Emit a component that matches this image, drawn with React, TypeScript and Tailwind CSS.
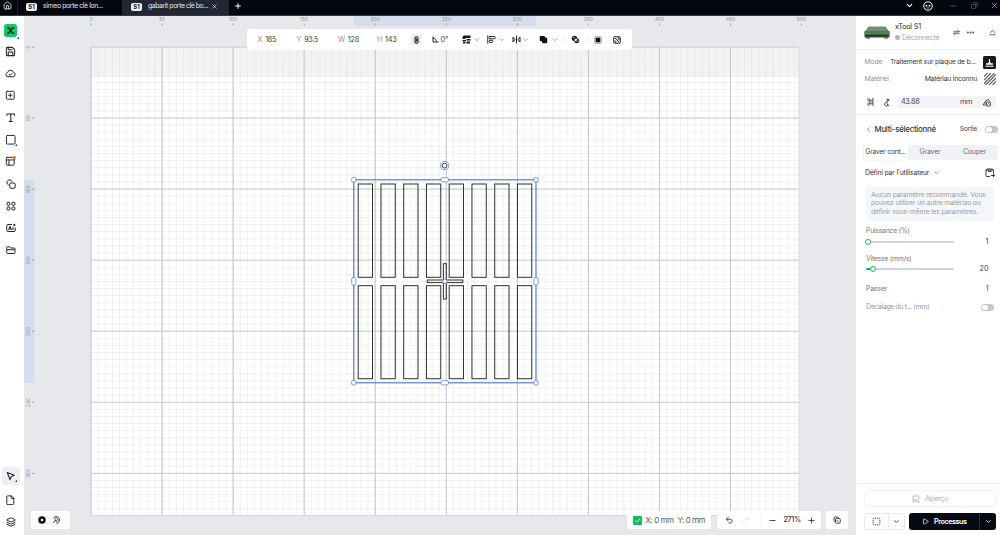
import type { ReactNode } from "react";
import {
  AlignStartVertical, ChevronDown, ChevronLeft, Copy, Ellipsis,
  House, Layers, Minus, Plus, Redo2, Save, Square, SquareDashed, Type, Undo2, X,
  SquarePlus, PanelsTopLeft, Play, File as FileIcon,
} from "lucide-react";

const STEP = 71.05;
const OX = 67; // board origin inside the canvas drawing
const OY = 31;
const BOARD_W = 708;
const BOARD_H = 468.5;

const range = (n: number) => Array.from({ length: n }, (_, i) => i);

function Canvas() {
  return (
    <svg width="832" height="519" viewBox="0 0 832 519" className="block">
      <rect width="832" height="519" fill="#e7e8ec" />
      <rect x={OX} y={OY} width={BOARD_W} height={BOARD_H} fill="#fff" />
      <rect x={OX} y={OY} width={BOARD_W} height="30" fill="#f2f3f5" />
      {range(100).map((i) => (
        <line key={i} x1={OX + i * 7.105} x2={OX + i * 7.105} y1={OY} y2={OY + BOARD_H} stroke="#d9dadc" strokeWidth="0.5" opacity="0.75" />
      ))}
      {range(66).map((i) => (
        <line key={i} y1={OY + i * 7.105} y2={OY + i * 7.105} x1={OX} x2={OX + BOARD_W} stroke="#d9dadc" strokeWidth="0.5" opacity={i < 5 ? 0.25 : 0.75} />
      ))}
      {range(10).map((i) => (
        <line key={i} x1={OX + i * STEP} x2={OX + i * STEP} y1={OY} y2={OY + BOARD_H} stroke="#c3c4c6" strokeWidth="1" />
      ))}
      {range(7).map((i) => (
        <line key={i} y1={OY + i * STEP} y2={OY + i * STEP} x1={OX} x2={OX + BOARD_W} stroke="#c9cacc" strokeWidth="1" />
      ))}
      <rect x={OX} y={OY} width={BOARD_W} height={BOARD_H} fill="none" stroke="#d8d9dc" strokeWidth="1" />

      <rect x="330" y="0" width="182" height="10" fill="#d4dced" />
      <rect x="0" y="164" width="10.5" height="203" fill="#d4dced" />
      <g fontFamily="Inter, sans-serif" fontSize="5" fill="#8f929a" textAnchor="middle">
        {range(11).map((i) => (
          <g key={i}>
            <text x={OX + i * STEP} y="5">{i * 50}</text>
            <rect x={OX - 0.4 + i * STEP} y="7.5" width="0.8" height="2" />
          </g>
        ))}
        {range(7).map((i) => (
          <g key={i}>
            <text transform={`translate(5.5 ${OY + i * STEP}) rotate(-90)`}>{i * 50}</text>
            <rect x="8" y={OY - 0.4 + i * STEP} width="2.4" height="0.8" />
          </g>
        ))}
      </g>

      <g fill="none" stroke="#303030" strokeWidth="1">
        {range(8).map((i) => (
          <g key={i}>
            <rect x={334.2 + i * 22.75} y="168" width="14.3" height="93.3" />
            <rect x={334.2 + i * 22.75} y="269.7" width="14.3" height="93" />
          </g>
        ))}
        <rect x="403.3" y="264" width="35.5" height="2.6" />
        <rect x="419.4" y="247.7" width="2.9" height="35.3" />
      </g>
      <rect x="329.8" y="163.8" width="182.2" height="203" fill="none" stroke="#4873c8" strokeWidth="1.1" />
      <g fill="#fff" stroke="#5a84df" strokeWidth="0.8">
        {[329.8, 512].map((x) => [163.8, 366.8].map((y) => <rect key={`${x}-${y}`} x={x - 2.1} y={y - 2.1} width="4.2" height="4.2" rx="0.8" />))}
        {[163.8, 366.8].map((y) => <rect key={y} x="417" y={y - 2.1} width="7.5" height="4.2" rx="1.4" />)}
        {[329.8, 512].map((x) => <rect key={x} x={x - 2.1} y="261.5" width="4.2" height="7.6" rx="1.4" />)}
        <rect x="418.9" y="263.3" width="4" height="4" rx="0.7" />
        <circle cx="420.6" cy="149.7" r="4.1" />
      </g>
      <circle cx="420.6" cy="149.7" r="2.4" fill="#fff" stroke="#333b4f" strokeWidth="1" />
    </svg>
  );
}

function Tab({ label, active }: { label: string; active?: boolean }) {
  return (
    <div className={`flex h-[15px] items-center text-[6.900px] text-[#e4e5e9] ${active ? "w-[107px] bg-[#232633] pl-[9px]" : "w-[104px] pl-2"}`}>
      <span className="flex h-2 w-[11px] items-center justify-center rounded-[2px] bg-[#f1f2f6] text-[6px] leading-none font-bold text-[#171a26]">S1</span>
      <span className={`whitespace-nowrap ${active ? "ml-[6px] w-[60px] tracking-[-0.430px]" : "ml-[6px] tracking-[-0.370px]"}`}>{label}</span>
      {active && <X size={7} strokeWidth={2.400} className="ml-[3px] shrink-0" />}
    </div>
  );
}

function TopBar() {
  return (
    <header className="flex h-4 shrink-0 items-center border-b border-[#393640] bg-[#04070f] text-white">
      <div className="flex h-[15px] w-[18px] items-center justify-center border-r border-[#1b1e27]">
        <House size={9} strokeWidth={2} className="-mt-[4px] -ml-[3px]" />
      </div>
      <div className="flex h-[15px] items-start overflow-hidden">
        <div className="-mt-[1px] flex items-center">
          <Tab label="simeo porte clé lon..." />
        </div>
        <div className="flex h-[15px] bg-[#232633]">
          <div className="-mt-[1px]"><Tab label="gabarit porte clé bo..." active /></div>
        </div>
        <Plus size={8} strokeWidth={3} className="mt-[2px] ml-[5px]" />
      </div>
      <div className="-mt-[4px] ml-auto flex items-center">
        <ChevronDown size={9} strokeWidth={3} />
        <svg width="10" height="10" viewBox="0 0 20 20" className="ml-[9px]" fill="none" stroke="#fff" strokeWidth="2">
          <circle cx="10" cy="10" r="8.500" />
          <circle cx="7" cy="9.500" r="1.800" fill="#fff" stroke="none" />
          <circle cx="13" cy="9.500" r="1.800" fill="#fff" stroke="none" />
          <path d="M7 14h6" strokeWidth="1.300" />
        </svg>
        <Minus size={8} strokeWidth={2} className="ml-[16px] text-[#777a83]" />
        <Copy size={7} strokeWidth={2} className="ml-[14px] rotate-90 text-[#777a83]" />
        <X size={9} strokeWidth={2} className="mr-[1px] ml-[12px] text-[#a3a5ac]" />
      </div>
    </header>
  );
}

function Tool({ children }: { children: ReactNode }) {
  return <div className="relative flex h-[22px] w-full shrink-0 items-center justify-center">{children}</div>;
}

function Corner({ className }: { className: string }) {
  return <svg width="2" height="2" viewBox="0 0 2 2" className={`absolute ${className}`}><path d="M2 0v2H0Z" fill="#222" /></svg>;
}

function SideBar() {
  return (
    <aside className="flex w-6 shrink-0 flex-col bg-white pr-[3px] text-[#23262c]">
      <div className="relative mt-2 flex h-[13px] justify-center">
        <svg width="13" height="13" viewBox="0 0 26 26">
          <rect width="26" height="26" rx="5" fill="#17c56f" />
          <path d="M6 7.500h3.500l7.500 11h3.500M20.500 7.500H17l-7.500 11H6" fill="none" stroke="#06281a" strokeWidth="3" />
        </svg>
        <Corner className="top-[13px] left-[17px]" />
      </div>
      <div className="mt-[3.500px] flex flex-col items-center">
        <Tool><Save size={11} strokeWidth={2.300} /></Tool>
        <Tool>
          <svg width="11" height="11" viewBox="0 0 22 22" fill="none" stroke="currentColor" strokeWidth="2" strokeLinejoin="round">
            <path d="M6 17.500a4.300 4.300 0 0 1-.800-8.500 6 6 0 0 1 11.600-.300A4.500 4.500 0 0 1 16.500 17.500Z" />
            <path d="m8 12.300 2.300 2.200 4-4" />
          </svg>
        </Tool>
        <Tool><SquarePlus size={10.500} strokeWidth={2.200} /></Tool>
        <Tool><Type size={11.500} strokeWidth={2.200} /></Tool>
        <Tool>
          <Square size={11.500} strokeWidth={2} />
          <Corner className="top-[15px] left-[15px]" />
        </Tool>
        <Tool>
          <PanelsTopLeft size={10.500} strokeWidth={2.200} />
          <span className="absolute top-[5px] left-[13px] size-[3px] rounded-full bg-[#f0762b]" />
        </Tool>
        <Tool>
          <svg width="10" height="10" viewBox="0 0 20 20" fill="none" stroke="currentColor" strokeWidth="2">
            <rect x="7.500" y="8" width="11" height="10.500" rx="2.500" />
            <path d="M5.500 12A5.300 5.300 0 1 1 12.300 5.500" />
          </svg>
        </Tool>
        <Tool>
          <svg width="10" height="10" viewBox="0 0 20 20" fill="none" stroke="currentColor" strokeWidth="2">
            <rect x="2" y="2.500" width="6" height="6" rx="2" /><rect x="12" y="2.500" width="6" height="6" rx="2" />
            <rect x="2" y="12" width="6" height="6" rx="2" /><rect x="12" y="12" width="6" height="6" rx="2" />
          </svg>
        </Tool>
        <Tool>
          <svg width="10" height="10" viewBox="0 0 20 20" fill="none" stroke="currentColor" strokeWidth="2">
            <path d="M12 3H4a2.500 2.500 0 0 0-2.500 2.500v9A2.500 2.500 0 0 0 4 17h12a2.500 2.500 0 0 0 2.500-2.500V9" />
            <path d="M5 14l3-7.500L11 14M6 12h4M14 8v6" />
            <path d="M16.500 1.500v5M14 4h5" />
          </svg>
        </Tool>
        <Tool>
          <svg width="10" height="10" viewBox="0 0 20 20" fill="none" stroke="currentColor" strokeWidth="2">
            <path d="M1.500 15V5A1.500 1.500 0 0 1 3 3.500h4l2 2.500h7.500A1.500 1.500 0 0 1 18 7.500V15a2 2 0 0 1-2 2H3.500a2 2 0 0 1-2-2ZM2 9.500h16" />
          </svg>
        </Tool>
      </div>
      <div className="mt-auto mb-[2px] flex flex-col items-center">
        <div className="relative mb-[4px] ml-[1px] flex size-[18px] items-center justify-center rounded-[3px] bg-[#eeeff4]">
          <svg width="10" height="10" viewBox="0 0 20 20" fill="none" stroke="currentColor" strokeWidth="2.200" strokeLinejoin="round">
            <path d="M2.500 3 16.500 8.500 11 11l-3 6Z" />
          </svg>
          <Corner className="top-[13px] left-[13px]" />
        </div>
        <Tool><FileIcon size={10.500} strokeWidth={2.200} /></Tool>
        <Tool><Layers size={10} strokeWidth={2.300} /></Tool>
      </div>
    </aside>
  );
}

function Field({ name, value, className }: { name: string; value: string; className: string }) {
  return (
    <div className={`flex shrink-0 items-center gap-[3px] tracking-[-0.250px] ${className}`}>
      <span className="text-[#92959c]">{name}</span>
      <span>{value}</span>
    </div>
  );
}

function Caret() {
  return <ChevronDown size={7.500} strokeWidth={2.600} className="shrink-0 text-[#8f9298]" />;
}

function PropertyBar() {
  return (
    <div className="absolute top-[13px] left-[223px] flex h-[21px] w-[385px] items-center rounded-[3px] bg-white pl-[10.500px] text-[7.200px] text-[#3b3e45]">
      <Field name="X" value="185" className="w-[39px]" />
      <Field name="Y" value="93.5" className="w-[41.500px]" />
      <Field name="W" value="128" className="w-[39px]" />
      <Field name="H" value="143" className="w-[34px]" />
      <div className="flex size-[11px] shrink-0 items-center justify-center rounded-[2px] bg-[#eff0f4]">
        <svg width="5" height="8" viewBox="0 0 10 16" fill="none" stroke="#222" strokeWidth="2.400">
          <rect x="2" y="1.500" width="6" height="13" rx="3" /><path d="M5 5v6" />
        </svg>
      </div>
      <svg width="7" height="7" viewBox="0 0 14 14" className="ml-[9.500px]" fill="none" stroke="#222" strokeWidth="2">
        <path d="M2 1v11h11M2 4.500c5 0 6.500 3.500 6.500 7" />
      </svg>
      <span className="ml-[2px] w-[18px]">0°</span>
      <svg width="9" height="9" viewBox="0 0 18 18" className="ml-[3.500px]" fill="#16181c">
        <path d="M4 1h13v5H7v2H1V5q0-4 3-4ZM1 10h7v2H1ZM2 13h5v4H2ZM9 8h8v3H9ZM9 13h7v4H9Z" />
      </svg>
      <div className="ml-[2px]"><Caret /></div>
      <AlignStartVertical size={9} strokeWidth={2.600} className="ml-[6.500px] text-[#222]" />
      <div className="ml-[1.500px]"><Caret /></div>
      <svg width="9" height="9" viewBox="0 0 18 18" className="ml-[7px]" fill="none" stroke="#222" strokeWidth="2">
        <path d="M9 1v16M2 4v10l4-5ZM16 4v10l-4-5Z" />
      </svg>
      <div className="ml-[1px]"><Caret /></div>
      <svg width="9" height="9" viewBox="0 0 18 18" className="ml-[9.500px]" fill="#111">
        <path d="M3 2h7q2 0 2 2v1h2q2.500 0 2.500 2.500V14q0 2.500-2.500 2.500H8.500Q6 16.500 6 14v-1.500H4Q1.500 12.500 1.500 10V4Q1.500 2 3 2Z" />
      </svg>
      <div className="ml-[2.500px]"><Caret /></div>
      <span className="ml-[5px] h-[9px] w-px bg-[#f1f1f3]" />
      <svg width="9" height="9" viewBox="0 0 18 18" className="ml-[7px]">
        <circle cx="7" cy="7" r="5.500" fill="#222" /><circle cx="11.500" cy="11.500" r="5" fill="#222" />
        <path d="M8 11.500 11.500 8" stroke="#fff" strokeWidth="4" /><path d="M4 6l3-2M12 14l3-3" stroke="#fff" strokeWidth="1.200" />
      </svg>
      <span className="ml-[7px] h-[9px] w-px bg-[#f1f1f3]" />
      <svg width="8" height="8" viewBox="0 0 16 16" className="ml-[6px]" fill="none" stroke="#555" strokeWidth="1.300">
        <rect x="1.500" y="1.500" width="13" height="13" strokeDasharray="3 1" /><rect x="4" y="4" width="8" height="8" fill="#111" stroke="#111" />
      </svg>
      <svg width="8" height="8" viewBox="0 0 16 16" className="ml-[11px]" fill="none" stroke="#222" strokeWidth="2">
        <rect x="1.500" y="1.500" width="13" height="13" rx="1.500" /><path d="M4 4l8 8M9 4h3v4M4 9v3h3" />
      </svg>
    </div>
  );
}

function BottomControls() {
  return (
    <>
      <div className="absolute top-[495px] left-[7px] flex h-[18px] w-[39px] items-center gap-[6px] rounded-[3px] bg-white pl-[7px]">
        <svg width="8" height="8" viewBox="0 0 16 16"><circle cx="8" cy="8" r="5" fill="none" stroke="#111" strokeWidth="5" /></svg>
        <svg width="8" height="8" viewBox="0 0 16 16" fill="none" stroke="#333" strokeWidth="1.700">
          <path d="M2 5A7 7 0 1 1 8 15M5 5.500A4 4 0 1 1 10 11.500M2 14l6-6M5 8h3.500v3.500" />
        </svg>
      </div>
      <div className="absolute top-[495px] left-[603px] flex h-[18px] items-center">
        <div className="flex h-[18px] w-[84px] items-center rounded-[3px] bg-white pl-[5.500px] text-[8px] tracking-[-0.450px] whitespace-nowrap text-[#575b64]">
          <svg width="9" height="9" viewBox="0 0 18 18" className="mr-[4px] shrink-0"><rect width="18" height="18" rx="2" fill="#12bd62" /><path d="m4.500 9 3.300 3.300L13.500 6" fill="none" stroke="#fff" strokeWidth="2" /></svg>
          <span className="w-[32px]">X: 0 mm</span><span>Y: 0 mm</span>
        </div>
        <div className="ml-[6px] flex h-[18px] w-[104px] items-center rounded-[3px] bg-white pl-[8px] text-[#333]">
          <Undo2 size={8.500} strokeWidth={2.400} />
          <Redo2 size={8.500} strokeWidth={2} className="ml-[8px] text-[#e1e2e5]" />
          <span className="ml-[10px] h-3 w-px bg-[#f3f3f5]" />
          <Minus size={9} strokeWidth={2.300} className="ml-[6.500px]" />
          <span className="ml-[7px] w-[18px] text-[7.200px] font-medium tracking-[-0.350px]">271%</span>
          <Plus size={9} strokeWidth={2.300} className="ml-[5px]" />
        </div>
        <div className="ml-[5px] flex h-[18px] w-[22px] items-center justify-center rounded-[3px] bg-white">
          <svg width="8" height="8" viewBox="0 0 16 16" fill="none" stroke="#333" strokeWidth="1.800">
            <rect x="2" y="2" width="9" height="9" rx="2" /><path d="M5 8V6.500Q5 5 7 5h5.500Q14.500 5 14.500 7v5.500q0 2-2 2H7q-2 0-2-2Z" fill="#fff" /><path d="m7 8 4 4" />
          </svg>
        </div>
      </div>
    </>
  );
}

function Toggle() {
  return (
    <span className="flex h-[7px] w-[13px] shrink-0 items-center rounded-full bg-[#c6c7cb] p-px">
      <span className="h-[5px] w-[6px] rounded-full bg-white" />
    </span>
  );
}

function Slider({ label, value, percent }: { label: string; value: string; percent: number }) {
  return (
    <div className="h-[27.500px] pl-[10px]">
      <div className="h-[10px] text-[6.900px] leading-[10px] text-[#777a81]">{label}</div>
      <div className="flex h-[11px] items-center">
        <div className="relative h-[2px] w-[88px] rounded-full bg-[#d2d3d6]">
          <div className="h-full rounded-full bg-[#12b76a]" style={{ width: `${percent}%` }} />
          <div className="absolute top-[-2px] size-[6px] -translate-x-1/2 rounded-full border-[1.500px] border-[#12b76a] bg-white" style={{ left: `${percent}%` }} />
        </div>
        <span className="ml-auto pr-[9.500px] text-[7.200px] tracking-normal text-[#33363c]">{value}</span>
      </div>
    </div>
  );
}

function Device() {
  return (
    <div className="flex h-[33.500px] shrink-0 border-b border-[#eeeef1] pl-2">
      <svg width="26" height="15" viewBox="0 0 52 30" className="mt-[9px] shrink-0">
        <path d="M9 3h34l8 11H1Z" fill="#6f8f70" /><path d="M1 13h50v12H1Z" fill="#34483b" />
        <path d="M1 13h50v6H1Z" fill="#4d8254" /><path d="M4 21h43" stroke="#202f27" strokeWidth="2" /><path d="M4 26h8M40 26h8" stroke="#333" strokeWidth="2" />
      </svg>
      <div className="ml-[5px] pt-[6px] text-[7.200px] leading-[10.500px]">
        <div className="tracking-[-0.200px] whitespace-nowrap text-[#22252b]">xTool S1</div>
        <div className="flex items-center gap-[2px] text-[7px] tracking-[-0.280px] text-[#a5a8af]"><span className="size-[5px] rounded-full bg-[#b4b6bb]" />Déconnecté</div>
      </div>
      <div className="mt-[12px] mr-[4px] ml-auto flex h-[8px] items-center text-[#444]">
        <svg width="7" height="7" viewBox="0 0 14 14" fill="none" stroke="currentColor" strokeWidth="1.700"><path d="M1 5.500h12L9 1.500M13 8.500H1l4 4" /></svg>
        <Ellipsis size={9} strokeWidth={2.800} className="ml-[6px]" />
        <span className="ml-[7px] h-2 w-px bg-[#f3f3f5]" />
        <svg width="7" height="7" viewBox="0 0 14 14" className="ml-[6px]" fill="none" stroke="currentColor" strokeWidth="1.600"><path d="m1.500 8 5.500-5 5.500 5M1 11.500h12" /></svg>
      </div>
    </div>
  );
}

function Material() {
  return (
    <div className="flex h-[65px] shrink-0 flex-col border-b border-[#eeeef1] pr-[4px] pl-[8.500px] text-[6.800px] text-[#33363c]">
      <div className="mt-[6px] flex h-[13px] items-center tracking-[-0.220px] whitespace-nowrap">
        <span className="w-[25.500px] shrink-0 tracking-[-0.100px] text-[#92959c]">Mode</span>
        <span>Traitement sur plaque de b...</span>
        <svg width="13" height="13" viewBox="0 0 26 26" className="ml-auto shrink-0"><rect width="26" height="26" rx="3" fill="#17191e" /><path d="M13 6v9M5 20.500h16" stroke="#fff" strokeWidth="2.200" /><path d="M6 14.500h14v3H6ZM11 12h4v3h-4Z" fill="#fff" /></svg>
      </div>
      <div className="mt-[4px] flex h-[13px] items-center tracking-[-0.220px] whitespace-nowrap">
        <span className="text-[#92959c]">Matériel</span>
        <span className="ml-auto">Matériau inconnu</span>
        <svg width="12" height="12" viewBox="0 0 24 24" className="ml-[7px] shrink-0"><path d="M0 7 7 0M0 14 14 0M0 21 21 0M3 24 24 3M10 24 24 10M17 24l7-7" stroke="#55575c" strokeWidth="2.200" /></svg>
      </div>
      <div className="mt-[10px] flex h-[13px] items-center text-[#444]">
        <svg width="8" height="8" viewBox="0 0 16 16" className="ml-[2px]" fill="none" stroke="currentColor" strokeWidth="1.700"><circle cx="3.500" cy="3.500" r="2.300" /><circle cx="12.500" cy="3.500" r="2.300" /><circle cx="3.500" cy="12.500" r="2.300" /><circle cx="12.500" cy="12.500" r="2.300" /><path d="M5.500 5.500h5v5h-5Z" /></svg>
        <svg width="8" height="9" viewBox="0 0 16 18" className="ml-[9px]" fill="none" stroke="currentColor" strokeWidth="1.800"><path d="M8 12V2l5 2-5 3M6 8Q2 10 3 14q3 4 8 1l-3-3M9 15l3-1" /></svg>
        <div className="ml-[6px] flex h-[12px] w-[99px] items-center rounded-[2px] bg-[#f3f4f7] pl-[3.500px] text-[7.200px] tracking-[-0.250px] text-[#444]">
          <span>43.88</span><span className="ml-auto">mm</span>
          <svg width="9" height="9" viewBox="0 0 18 18" className="mr-[5px] ml-[10px]" fill="none" stroke="currentColor" strokeWidth="1.800"><path d="M8 7q1-5 5-4 2 1 1 4M8 5 2 14h6M5 10h4" /><rect x="9" y="8" width="8" height="8" rx="1" /><path d="M11 13q2-4 4 0" /></svg>
        </div>
      </div>
    </div>
  );
}

function Parameters() {
  return (
    <div className="pr-[2px] tracking-[-0.270px]">
      <div className="flex h-[30px] items-center pl-[9px]">
        <ChevronLeft size={7} strokeWidth={2.200} className="text-[#444]" />
        <span className="ml-[2.500px] text-[7.800px] font-medium tracking-[-0.230px] whitespace-nowrap text-[#30333a]">Multi-sélectionné</span>
        <span className="mr-[8px] ml-auto text-[6.800px] text-[#484b51]">Sortie</span>
        <Toggle />
      </div>
      <div className="ml-[7px] flex h-[15.500px] items-center rounded-[2px] bg-[#f1f2f5] p-[0.500px] text-[6.900px] text-[#686b73]">
        <span className="flex h-full w-[44px] items-center justify-center rounded-[2px] bg-white whitespace-nowrap text-[#3e4147] shadow-xs">Graver cont...</span>
        <span className="w-[45px] text-center tracking-[-0.150px]">Graver</span>
        <span className="w-[44px] text-center tracking-[-0.150px]">Couper</span>
      </div>
      <div className="flex h-[26px] items-center pl-[9px] text-[6.900px] text-[#33363c]">
        <span className="tracking-[-0.200px]">Défini par l'utilisateur</span>
        <span className="ml-[4px]"><Caret /></span>
        <svg width="10" height="10" viewBox="0 0 20 20" className="mr-[3px] ml-auto" fill="none" stroke="#333" strokeWidth="1.900"><path d="M10 17H4a2 2 0 0 1-2-2V4h15v7M2 5l2-3h11l2 3M7 4v3h5V4M12 15h7M16 12l3 3-3 3" /></svg>
      </div>
      <div className="ml-[10px] h-[35px] w-[128px] rounded-[3px] bg-[#f5f6f9] py-[4.500px] pl-[5px] text-[6.800px] leading-[8.600px] tracking-[-0.150px] whitespace-nowrap text-[#9a9da8]">
        Aucun paramètre recommandé. Vous<br />pouvez utiliser un autre matériau ou<br />définir vous-même les paramètres.
      </div>
      <div className="mt-[5px]">
        <Slider label="Puissance (%)" value="1" percent={2} />
        <Slider label="Vitesse (mm/s)" value="20" percent={8} />
      </div>
      <div className="-mt-[2.500px] flex h-[19px] items-center pr-[9.500px] pl-[10px] text-[7px] text-[#777a81]">
        <span>Passer</span><span className="ml-auto tracking-normal text-[#33363c]">1</span>
      </div>
      <div className="flex h-[19px] items-center pr-[4px] pl-[10px] text-[6.900px] text-[#9699a0]">
        <span className="mr-auto tracking-[-0.330px]">Décalage du t... (mm)</span><Toggle />
      </div>
    </div>
  );
}

function Actions() {
  return (
    <div className="mt-auto h-[52px] shrink-0 border-t border-[#f0f0f3] pt-[6px] pr-[4px] pl-[8px] text-[7.300px] tracking-[-0.350px]">
      <div className="flex h-[17px] items-center justify-center gap-[5px] rounded-[3px] border border-[#f2f2f5] text-[#b0b2b8]">
        <svg width="8" height="8" viewBox="0 0 16 16" fill="none" stroke="currentColor" strokeWidth="1.700"><path d="M14 9V3a1 1 0 0 0-1-1H2v11h5M2 11l4-3 3 3" /><circle cx="11" cy="12" r="2.500" /><path d="m13 14 2 1" /></svg>
        Aperçu
      </div>
      <div className="mt-[6px] flex h-[17px]">
        <div className="flex w-[41px] items-center rounded-[3px] border border-[#e9e9ed] text-[#333]">
          <span className="flex w-[23px] justify-center"><SquareDashed size={9} strokeWidth={2.300} /></span>
          <span className="flex h-full flex-1 items-center justify-center border-l border-[#e9e9ed]"><ChevronDown size={7} strokeWidth={3} /></span>
        </div>
        <div className="ml-[4px] flex flex-1 items-center rounded-[3px] bg-[#070a12] text-[7.200px] font-semibold text-white">
          <Play size={7} strokeWidth={2.500} className="ml-[13px]" />
          <span className="ml-[5px] tracking-[-0.430px]">Processus</span>
          <span className="ml-auto flex h-full w-[17px] items-center justify-center border-l border-[#292c33]"><ChevronDown size={7} strokeWidth={3} /></span>
        </div>
      </div>
    </div>
  );
}

export default function App() {
  return (
    <div className="flex h-[535px] w-[1000px] flex-col overflow-hidden bg-white font-['Inter',sans-serif] text-[7.200px] leading-none">
      <TopBar />
      <div className="flex min-h-0 flex-1">
        <SideBar />
        <main className="relative h-[519px] w-[832px] shrink-0 overflow-hidden">
          <Canvas />
          <PropertyBar />
          <BottomControls />
        </main>
        <aside className="flex w-36 shrink-0 flex-col bg-white">
          <Device />
          <Material />
          <Parameters />
          <Actions />
        </aside>
      </div>
    </div>
  );
}
